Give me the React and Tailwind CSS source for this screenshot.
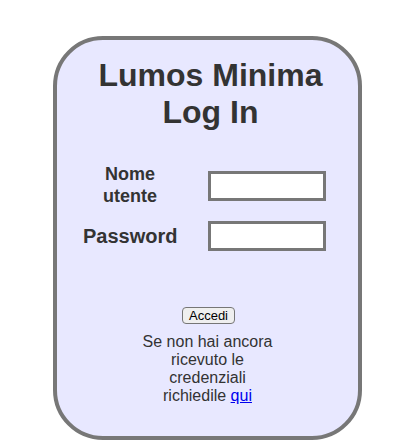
export default function App() {
    return (
        <div className="min-h-[440px] bg-white pt-[36px] pl-[53px] font-['Liberation_Sans',Arial,sans-serif] text-[#333]">
            {/* Card */}
            <div className="w-[309px] h-[404px] border-4 border-[#777] rounded-[50px] bg-[#e8e8ff] flex flex-col items-center pt-[17px]">
                <h1 className="ml-[6px] text-[32px] leading-[37px] font-bold text-center">
                    Lumos Minima
                    <br />
                    Log In
                </h1>

                {/* Form */}
                <div className="mt-[33px] ml-[-6px] grid grid-cols-[94px_118px] gap-x-[31px] gap-y-[14px] items-center">
                    <label className="text-[18px] leading-[21.6px] font-bold text-center">
                        Nome
                        <br />
                        utente
                    </label>
                    <input type="text" className="h-[30px] w-[118px] border-[3px] border-[#777] bg-white outline-none" />
                    <label className="text-[20px] leading-[23px] font-bold text-center">Password</label>
                    <input type="password" className="h-[30px] w-[118px] border-[3px] border-[#777] bg-white outline-none" />
                </div>

                <button className="mt-[56px] ml-[2px] h-[17px] px-[6px] border border-[#767676] rounded-[4px] bg-[#efefef] text-[13px] leading-[15px] text-black">
                    Accedi
                </button>

                <p className="mt-[9px] w-[140px] text-[16px] leading-[18px] text-center">
                    Se non hai ancora ricevuto le credenziali richiedile{' '}
                    <a href="#" className="text-[#0000ee] underline">qui</a>
                </p>
            </div>
        </div>
    );
}
